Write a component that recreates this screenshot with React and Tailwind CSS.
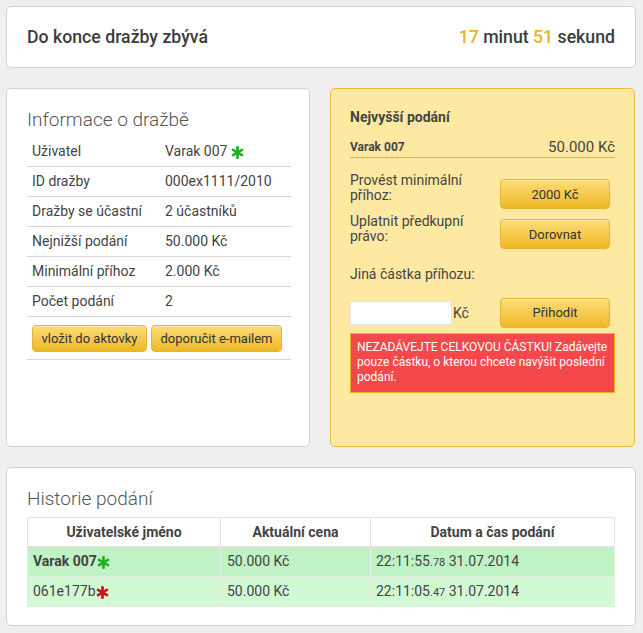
import React from "react";

const Star = ({ color }) => (
  <svg width="13" height="13" viewBox="0 0 20 20" className="inline-block align-[-3px]">
    <g stroke={color} strokeWidth="4.2" strokeLinecap="round">
      <line x1="10" y1="2" x2="10" y2="18" />
      <line x1="3.1" y1="6" x2="16.9" y2="14" />
      <line x1="3.1" y1="14" x2="16.9" y2="6" />
    </g>
  </svg>
);

const btn =
  "rounded-[4px] border border-[#e4b43a] bg-gradient-to-b from-[#fddd74] to-[#efb81d] font-normal text-[#333] shadow-[inset_0_1px_0_rgba(255,255,255,0.35)]";

const infoRows = [
  ["Uživatel", "Varak 007", true],
  ["ID dražby", "000ex1111/2010"],
  ["Dražby se účastní", "2 účastníků"],
  ["Nejnižší podání", "50.000 Kč"],
  ["Minimální příhoz", "2.000 Kč"],
  ["Počet podání", "2"],
];

const history = [
  { name: "Varak 007", bold: true, star: "#22b022", price: "50.000 Kč", time: "22:11:55", ms: ".78", date: "31.07.2014", bg: "bg-[#bff2c5]" },
  { name: "061e177b", bold: false, star: "#c41a1a", price: "50.000 Kč", time: "22:11:05", ms: ".47", date: "31.07.2014", bg: "bg-[#d2f8d4]" },
];

export default function App() {
  return (
    <div className="min-h-screen bg-[#efefef] pl-[6px] pt-[6px] pb-[7px] font-['Roboto',sans-serif] text-[#444]">
      <div className="flex w-[630px] flex-col gap-5">
        {/* countdown */}
        <div className="flex h-[62px] items-center justify-between rounded-[5px] border border-[#d3d3d3] bg-white pl-[20px] pr-[20px]">
          <span className="text-[17.7px] font-medium text-[#3d3d3d]">Do konce dražby zbývá</span>
          <span className="text-[17.7px] font-medium text-[#3d3d3d]">
            <span className="text-[#e8b52a]">17</span> minut <span className="text-[#e8b52a]">51</span> sekund
          </span>
        </div>

        <div className="flex h-[359px] gap-5">
          {/* auction info */}
          <div className="w-[304px] rounded-[5px] border border-[#d3d3d3] bg-white pl-[20px] pr-[18px] pt-[19px]">
            <h2 className="text-[19px] leading-[24px] font-light text-[#555]">Informace o dražbě</h2>
            <div className="mt-[5px] text-[14px]">
              {infoRows.map(([label, value, star]) => (
                <div key={label} className="flex h-[30px] items-center border-b border-[#d6d6d6] pl-[5px]">
                  <span className="w-[133px]">{label}</span>
                  <span>
                    {value} {star && <Star color="#22b022" />}
                  </span>
                </div>
              ))}
              <div className="flex h-[43px] gap-[4px] border-b border-[#d6d6d6] pl-[5px] pt-[8px]">
                <button className={`${btn} h-[27px] w-[115px] text-[13px]`}>vložit do aktovky</button>
                <button className={`${btn} h-[27px] w-[131px] text-[13px]`}>doporučit e-mailem</button>
              </div>
            </div>
          </div>

          {/* highest bid */}
          <div className="w-[305px] rounded-[5px] border border-[#ebbd3c] bg-[#fee9a2] pl-[19px] pr-[19px] pt-[20px]">
            <div className="text-[14px] leading-[17px] font-bold text-[#444]">Nejvyšší podání</div>
            <div className="mt-[11px] flex h-[21px] items-center justify-between border-b border-[#e8b41e]">
              <span className="text-[12px] font-bold">Varak 007</span>
              <span className="text-[15px]">50.000 Kč</span>
            </div>
            <div className="mt-[15px] flex text-[14px] leading-[15px]">
              <div className="w-[150px]">Provést minimální příhoz:</div>
              <button className={`${btn} mt-[6px] h-[30px] w-[110px] text-[13px]`}>2000 Kč</button>
            </div>
            <div className="mt-[5px] flex text-[14px] leading-[15px]">
              <div className="w-[150px]">Uplatnit předkupní právo:</div>
              <button className={`${btn} mt-[5px] h-[30px] w-[110px] text-[13px]`}>Dorovnat</button>
            </div>
            <div className="mt-[17px] text-[14px] leading-[17px]">Jiná částka příhozu:</div>
            <div className="mt-[15px] flex h-[30px] items-center">
              <div className="flex w-[150px] items-center">
                <input className="h-[24px] w-[102px] border border-[#e6e6e6] bg-white outline-none" />
                <span className="ml-[1px] text-[14px]">Kč</span>
              </div>
              <button className={`${btn} h-[30px] w-[110px] text-[13px]`}>Přihodit</button>
            </div>
            <div className="mt-[5px] h-[60px] border border-[#e8b41e] bg-[#f5484a] px-[6px] pt-[6px] text-[12px] leading-[15px] text-white">
              NEZADÁVEJTE CELKOVOU ČÁSTKU! Zadávejte pouze částku, o kterou chcete navýšit poslední podání.
            </div>
          </div>
        </div>

        {/* history */}
        <div className="h-[159px] rounded-[5px] border border-[#d3d3d3] bg-white pl-[20px] pr-[20px] pt-[19px]">
          <h2 className="text-[19px] leading-[24px] font-light text-[#555]">Historie podání</h2>
          <table className="mt-[6px] w-[588px] border-collapse text-[14px]">
            <thead>
              <tr className="h-[29px] bg-white">
                <th className="w-[193px] border border-[#e3e3e3] font-bold">Uživatelské jméno</th>
                <th className="w-[150px] border border-[#e3e3e3] font-bold">Aktuální cena</th>
                <th className="border border-[#e3e3e3] font-bold">Datum a čas podání</th>
              </tr>
            </thead>
            <tbody>
              {history.map((r) => (
                <tr key={r.name} className={`h-[30px] ${r.bg}`}>
                  <td className={`border-x border-b border-[#e4ece4] pl-[5px] ${r.bold ? "font-bold" : ""}`}>
                    {r.name}
                    <Star color={r.star} />
                  </td>
                  <td className="border-x border-b border-[#e4ece4] pl-[6px]">{r.price}</td>
                  <td className="border-x border-b border-[#e4ece4] pl-[5px]">
                    {r.time}
                    <span className="text-[11px]">{r.ms}</span> {r.date}
                  </td>
                </tr>
              ))}
            </tbody>
          </table>
        </div>
      </div>
    </div>
  );
}
